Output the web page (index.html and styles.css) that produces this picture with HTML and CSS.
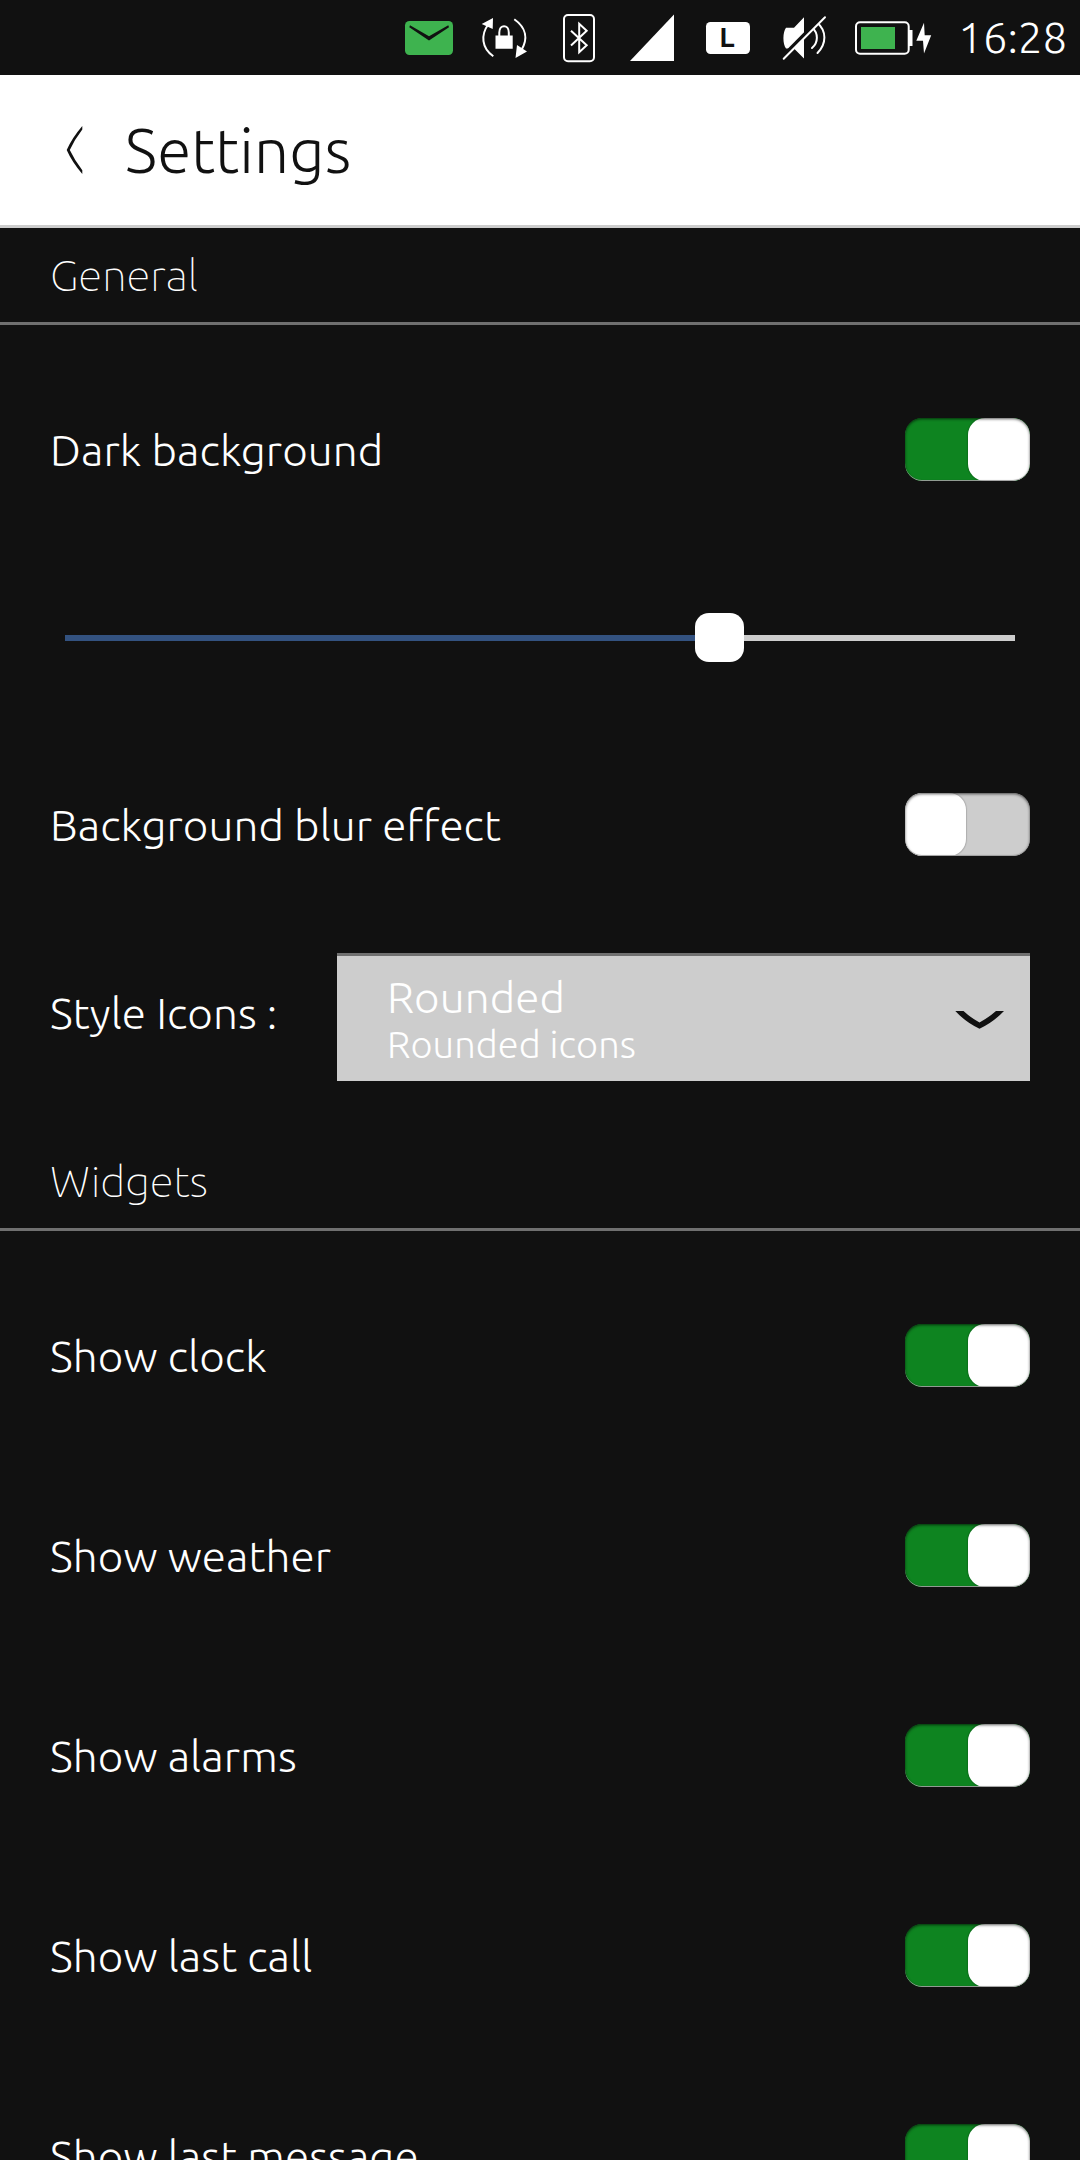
FILE: index.html
```html
<!DOCTYPE html>
<html lang="en">
<head>
<meta charset="utf-8">
<title>Settings</title>
<link rel="stylesheet" href="styles.css">
</head>
<body>
<div class="screen">
  <div class="status-bar">
    <svg class="status-icon" viewBox="391 0 75 75">
      <rect x="405" y="21" width="48" height="34" rx="4.5" fill="#3eb34f"/>
      <path d="M410 25.2 L429 36.3 L448.3 25.2 L449 27.2 L429 40.5 L409.3 27.2 Z" fill="#111"/>
    </svg>
    <svg class="status-icon" viewBox="466 0 75 75">
      <g fill="none" stroke="#fff" stroke-width="2">
        <path d="M493.3 56.3 C481.5 48 480.5 35 488.5 24"/>
        <path d="M514.3 19.3 C526.5 28 528 39 521.5 50"/>
        <path d="M499.3 36 V32.5 C499.3 24 508.8 24 508.8 32.5 V36"/>
      </g>
      <path d="M481.7 24 L493 18 L492.7 29 Z M517 45 L527 51.5 L515.5 58 Z M495.5 35.5 H512.7 V48.7 H495.5 Z" fill="#fff"/>
    </svg>
    <svg class="status-icon" viewBox="541 0 75 75">
      <g fill="none" stroke="#fff" stroke-width="2">
        <rect x="564" y="15" width="30" height="46.3" rx="4"/>
        <path d="M571 30.7 L586.7 45.3 L579.2 52.3 V23.8 L586.7 30.7 L571 45.6"/>
      </g>
    </svg>
    <svg class="status-icon" viewBox="616 0 75 75">
      <path d="M630 61 L674 14.5 V61 Z" fill="#fff"/>
    </svg>
    <svg class="status-icon" viewBox="691 0 75 75">
      <rect x="706" y="22" width="44" height="32" rx="4.5" fill="#fff"/>
      <text class="network-type" x="719.3" y="47.2">L</text>
    </svg>
    <svg class="status-icon" viewBox="766 0 75 75">
      <path d="M786 27.7 H794 L804 17.3 V58.5 L794 48.5 H786 C782.6 44 782.6 32 786 27.7 Z" fill="#fff"/>
      <g fill="none" stroke="#fff" stroke-width="2" stroke-linecap="round">
        <path d="M812 27.5 C818.5 33 818.5 42.5 812 48"/>
        <path d="M817 22.5 C827 31 826.5 44 817.5 53"/>
      </g>
      <path d="M782 57.5 L823.5 15.5" stroke="#111" stroke-width="4"/>
      <path d="M783.7 58.8 L825 17.3" stroke="#fff" stroke-width="2" stroke-linecap="round"/>
    </svg>
    <svg class="battery-icon" viewBox="841 0 100 75">
      <rect x="856" y="22.3" width="52.7" height="31.4" rx="4" fill="none" stroke="#fff" stroke-width="2"/>
      <rect x="909" y="30" width="3.5" height="16" fill="#fff"/>
      <rect x="861" y="27" width="34" height="22" fill="#3eb34f"/>
      <path d="M924 22.7 L916.3 40.7 H923 L924 53.5 L931.2 35.2 H924.7 Z" fill="#fff"/>
    </svg>
    <span class="clock">16:28</span>
  </div>

  <header class="header">
    <svg class="back" viewBox="62 122 25 56">
      <path d="M82.3 126 V129.4 Q74.5 139.5 69.8 150 Q74.5 160 82.3 170.3 V174 Q72 162 66.7 150 Q72 138 82.3 126 Z" fill="#111"/>
    </svg>
    <h1 class="title">Settings</h1>
  </header>

  <h2 class="section">General</h2>
  <div class="rows">
    <div class="row"><span>Dark background</span><div class="switch on"><div class="knob"></div></div></div>
    <div class="slider"><div class="filled"></div><div class="handle"></div><div class="rest"></div></div>
    <div class="row"><span>Background blur effect</span><div class="switch"><div class="knob"></div></div></div>
    <div class="style-row">
      <span class="style-label">Style Icons :</span>
      <div class="combo">
        <div class="combo-text">
          <div class="combo-value">Rounded</div>
          <div class="combo-hint">Rounded icons</div>
        </div>
        <svg class="arrow" viewBox="954 1009 51 22">
          <path d="M955.3 1011 H963.5 Q971 1018 979.5 1022.4 Q988 1018 996 1011 H1004 Q993 1022.5 979.5 1028.7 Q966 1022.5 955.3 1011 Z" fill="#111"/>
        </svg>
      </div>
    </div>
  </div>

  <h2 class="section">Widgets</h2>
  <div class="rows">
    <div class="row"><span>Show clock</span><div class="switch on"><div class="knob"></div></div></div>
    <div class="row"><span>Show weather</span><div class="switch on"><div class="knob"></div></div></div>
    <div class="row"><span>Show alarms</span><div class="switch on"><div class="knob"></div></div></div>
    <div class="row"><span>Show last call</span><div class="switch on"><div class="knob"></div></div></div>
    <div class="row"><span>Show last message</span><div class="switch on"><div class="knob"></div></div></div>
  </div>
</div>
</body>
</html>
```
FILE: styles.css
```css
* {
  box-sizing: border-box;
}

body {
  margin: 0;
  background: #111;
  color: #fff;
  font-family: Ubuntu, "Open Sans", "Noto Sans", sans-serif;
  font-size: 44px;
  font-weight: 300;
  line-height: 50px;
  letter-spacing: 0.09px;
}

.screen {
  width: 1080px;
  height: 2160px;
  overflow: hidden;
  display: flex;
  flex-direction: column;
}

.screen > * {
  flex-shrink: 0;
}

.status-bar {
  height: 75px;
  padding-left: 391px;
  display: flex;
  align-items: center;
}

.status-icon {
  width: 75px;
  height: 75px;
}

.battery-icon {
  width: 100px;
  height: 75px;
}

.network-type {
  font-size: 28px;
  font-weight: 600;
  fill: #111;
}

.clock {
  margin-left: 17px;
  padding-bottom: 1px;
  letter-spacing: -0.1px;
}

.header {
  height: 153px;
  padding-left: 62px;
  display: flex;
  align-items: center;
  background: #fff;
  border-bottom: 3px solid #cdcdcd;
  color: #111;
}

.back {
  width: 25px;
  height: 56px;
}

.title {
  margin: 0 0 0 38px;
  font-size: 62px;
  font-weight: 300;
  line-height: 70px;
  letter-spacing: 0.15px;
}

.section {
  margin: 0;
  height: 97px;
  padding-left: 50px;
  border-bottom: 3px solid #707070;
  font-size: 44px;
  font-weight: 100;
  line-height: 94px;
  letter-spacing: -0.05px;
}

.rows {
  padding-top: 25px;
}

.row {
  height: 200px;
  padding: 0 50px;
  display: flex;
  align-items: center;
  justify-content: space-between;
}

.switch {
  position: relative;
  width: 125px;
  height: 63px;
  margin-bottom: 1px;
  display: flex;
  border-radius: 17px;
  overflow: hidden;
  background: #cdcdcd;
}

.switch.on {
  justify-content: flex-end;
  background: #0e8420;
}

.knob {
  width: 61px;
  border-radius: 17px;
  background: #fff;
  box-shadow: 0 0 1px 1px rgba(0, 0, 0, 0.15);
}

.switch.on .knob {
  width: 62px;
}

/* Recessed edge drawn over both track and knob */
.switch::after {
  content: "";
  position: absolute;
  inset: 0;
  border-radius: 17px;
  box-shadow: inset 0 -1px 0 rgba(160, 160, 160, 0.9), inset 0 1px 3px rgba(0, 0, 0, 0.65);
}

.slider {
  height: 175px;
  padding: 0 65px;
  display: flex;
  align-items: center;
}

.filled {
  width: 630px;
  height: 6px;
  margin-top: 1px;
  background: #335280;
}

.handle {
  width: 49px;
  height: 49px;
  border-radius: 14px;
  background: #fff;
}

.rest {
  flex: 1;
  height: 6px;
  margin-top: 1px;
  background: #cdcdcd;
}

.style-row {
  height: 209px;
  padding: 28px 50px 0;
  display: flex;
  align-items: flex-start;
  justify-content: space-between;
}

.style-label {
  line-height: 119px;
}

.combo {
  width: 693px;
  height: 128px;
  padding: 16px 25px 0 50px;
  display: flex;
  justify-content: space-between;
  background: #cdcdcd;
  border-top: 3px solid #707070;
}

.combo-hint {
  font-size: 38px;
  line-height: 44px;
}

.arrow {
  width: 51px;
  height: 22px;
  margin-top: 37px;
}
```
